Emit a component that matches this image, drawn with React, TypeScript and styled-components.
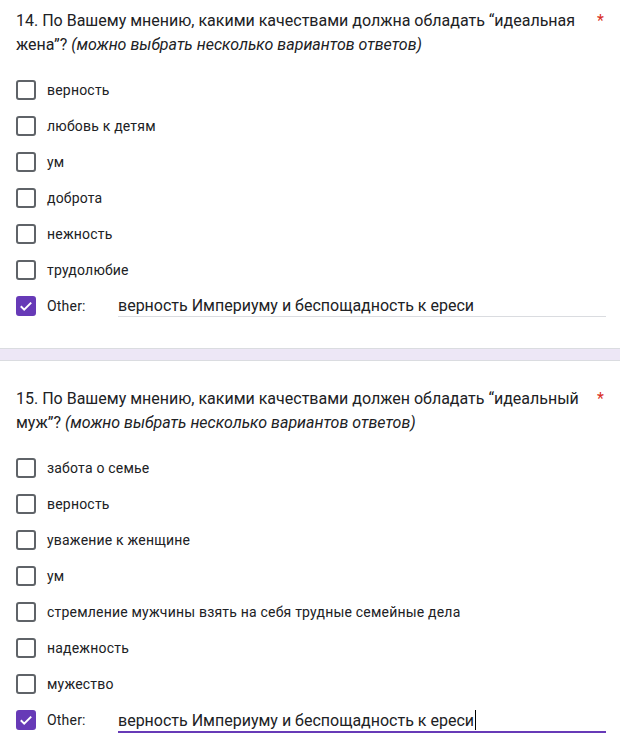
import styled, { createGlobalStyle } from "styled-components";

const GlobalStyle = createGlobalStyle`
  html, body {
    margin: 0;
    padding: 0;
    background: #fff;
  }
  body {
    font-family: Roboto, "Noto Sans", Arial, sans-serif;
    color: #202124;
  }
`;

const Page = styled.div`
  width: 620px;
  display: flex;
  flex-direction: column;
`;

const Card = styled.section<{ $top: number }>`
  padding: ${(p) => p.$top}px 14px 24px 16px;
  background: #fff;
`;

const Divider = styled.div`
  height: 11px;
  background: #ede7f6;
  border-top: 1px solid #dadce0;
  border-bottom: 1px solid #dadce0;
`;

const TitleRow = styled.div`
  display: flex;
  justify-content: space-between;
  align-items: flex-start;
`;

const Title = styled.h2`
  margin: 0;
  font-size: 16px;
  font-weight: 400;
  line-height: 24px;
  color: #202124;
  width: 570px;
`;

const Hint = styled.em`
  font-style: italic;
`;

const Required = styled.span`
  color: #d93025;
  font-size: 16px;
  line-height: 24px;
  padding-right: 2px;
`;

const Options = styled.ul`
  list-style: none;
  margin: 15px 0 0;
  padding: 0;
  display: flex;
  flex-direction: column;
`;

const Option = styled.li`
  display: flex;
  align-items: center;
  height: 36px;
`;

const Box = styled.span<{ $checked?: boolean }>`
  box-sizing: border-box;
  width: 20px;
  height: 20px;
  border-radius: 3px;
  border: 2px solid ${(p) => (p.$checked ? "#673ab7" : "#5f6368")};
  background: ${(p) => (p.$checked ? "#673ab7" : "transparent")};
  display: flex;
  align-items: center;
  justify-content: center;
  flex-shrink: 0;
`;

const Label = styled.span`
  margin-left: 11px;
  font-size: 14px;
  letter-spacing: 0.2px;
  color: #202124;
`;

const OtherLabel = styled(Label)`
  width: 71px;
  flex-shrink: 0;
`;

const OtherInput = styled.div<{ $focused?: boolean }>`
  flex: 1;
  display: flex;
  align-items: center;
  box-sizing: border-box;
  font-size: 16px;
  line-height: 21px;
  color: #202124;
  height: ${(p) => (p.$focused ? "26px" : "22px")};
  padding-top: ${(p) => (p.$focused ? "2px" : "0")};
  border-bottom: ${(p) => (p.$focused ? "2px solid #673ab7" : "1px solid #dadce0")};
`;

const Caret = styled.span`
  display: inline-block;
  width: 1px;
  height: 20px;
  background: #000;
  margin-left: 1px;
`;

const Check = () => (
  <svg width="16" height="16" viewBox="0 0 16 16">
    <path d="M2.8 8.2l3.4 3.4 7-7" fill="none" stroke="#fff" strokeWidth="2" />
  </svg>
);

type Question = {
  num: number;
  text: string;
  options: string[];
  other: string;
  focused?: boolean;
  top: number;
};

const questions: Question[] = [
  {
    num: 14,
    text: "По Вашему мнению, какими качествами должна обладать “идеальная жена”?",
    options: ["верность", "любовь к детям", "ум", "доброта", "нежность", "трудолюбие"],
    other: "верность Империуму и беспощадность к ереси",
    top: 9,
  },
  {
    num: 15,
    text: "По Вашему мнению, какими качествами должен обладать “идеальный муж”?",
    options: [
      "забота о семье",
      "верность",
      "уважение к женщине",
      "ум",
      "стремление мужчины взять на себя трудные семейные дела",
      "надежность",
      "мужество",
    ],
    other: "верность Империуму и беспощадность к ереси",
    focused: true,
    top: 26,
  },
];

const QuestionCard = ({ q }: { q: Question }) => (
  <Card $top={q.top}>
    <TitleRow>
      <Title>
        {q.num}. {q.text} <Hint>(можно выбрать несколько вариантов ответов)</Hint>
      </Title>
      <Required>*</Required>
    </TitleRow>
    <Options>
      {q.options.map((o) => (
        <Option key={o}>
          <Box />
          <Label>{o}</Label>
        </Option>
      ))}
      <Option>
        <Box $checked>
          <Check />
        </Box>
        <OtherLabel>Other:</OtherLabel>
        <OtherInput $focused={q.focused}>
          {q.other}
          {q.focused && <Caret />}
        </OtherInput>
      </Option>
    </Options>
  </Card>
);

export default function App() {
  return (
    <Page>
      <GlobalStyle />
      <QuestionCard q={questions[0]} />
      <Divider />
      <QuestionCard q={questions[1]} />
    </Page>
  );
}
